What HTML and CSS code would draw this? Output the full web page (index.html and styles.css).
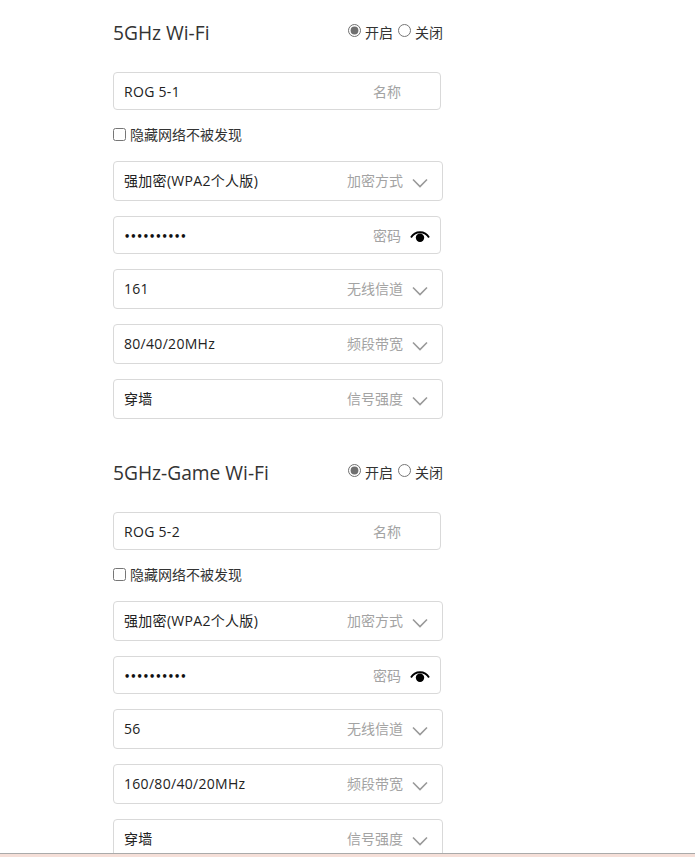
FILE: index.html
```html
<!DOCTYPE html>
<html lang="zh">
<head>
<meta charset="utf-8">
<title>Wi-Fi</title>
<link rel="stylesheet" href="styles.css">
</head>
<body>
<main class="page">
  <section class="band">
    <header class="band-head">
      <h2 class="band-title">5GHz Wi-Fi</h2>
      <div class="switch">
        <label class="switch-opt"><input type="radio" name="a" checked>开启</label>
        <label class="switch-opt"><input type="radio" name="a">关闭</label>
      </div>
    </header>
    <div class="field field-text"><span class="value">ROG 5-1</span><span class="hint">名称</span></div>
    <label class="hide-row"><input type="checkbox">隐藏网络不被发现</label>
    <div class="field field-select first-select"><span class="value">强加密(WPA2个人版)</span><span class="hint">加密方式</span><svg class="chev" viewBox="0 0 16 10"><path d="M1 1.5 8 8.5 15 1.5"/></svg></div>
    <div class="field field-pass"><span class="value dots">••••••••••</span><span class="hint">密码</span><svg class="eye" viewBox="0 0 20 14"><path class="eye-lid" d="M1 7.5C5 .5 15 .5 19 7.5"/><circle cx="10" cy="7.8" r="4.2"/></svg></div>
    <div class="field field-select"><span class="value">161</span><span class="hint">无线信道</span><svg class="chev" viewBox="0 0 16 10"><path d="M1 1.5 8 8.5 15 1.5"/></svg></div>
    <div class="field field-select"><span class="value">80/40/20MHz</span><span class="hint">频段带宽</span><svg class="chev" viewBox="0 0 16 10"><path d="M1 1.5 8 8.5 15 1.5"/></svg></div>
    <div class="field field-select"><span class="value">穿墙</span><span class="hint">信号强度</span><svg class="chev" viewBox="0 0 16 10"><path d="M1 1.5 8 8.5 15 1.5"/></svg></div>
  </section>
  <section class="band">
    <header class="band-head">
      <h2 class="band-title">5GHz-Game Wi-Fi</h2>
      <div class="switch">
        <label class="switch-opt"><input type="radio" name="b" checked>开启</label>
        <label class="switch-opt"><input type="radio" name="b">关闭</label>
      </div>
    </header>
    <div class="field field-text"><span class="value">ROG 5-2</span><span class="hint">名称</span></div>
    <label class="hide-row"><input type="checkbox">隐藏网络不被发现</label>
    <div class="field field-select first-select"><span class="value">强加密(WPA2个人版)</span><span class="hint">加密方式</span><svg class="chev" viewBox="0 0 16 10"><path d="M1 1.5 8 8.5 15 1.5"/></svg></div>
    <div class="field field-pass"><span class="value dots">••••••••••</span><span class="hint">密码</span><svg class="eye" viewBox="0 0 20 14"><path class="eye-lid" d="M1 7.5C5 .5 15 .5 19 7.5"/><circle cx="10" cy="7.8" r="4.2"/></svg></div>
    <div class="field field-select"><span class="value">56</span><span class="hint">无线信道</span><svg class="chev" viewBox="0 0 16 10"><path d="M1 1.5 8 8.5 15 1.5"/></svg></div>
    <div class="field field-select"><span class="value">160/80/40/20MHz</span><span class="hint">频段带宽</span><svg class="chev" viewBox="0 0 16 10"><path d="M1 1.5 8 8.5 15 1.5"/></svg></div>
    <div class="field field-select"><span class="value">穿墙</span><span class="hint">信号强度</span><svg class="chev" viewBox="0 0 16 10"><path d="M1 1.5 8 8.5 15 1.5"/></svg></div>
  </section>
</main>
<div class="bottom-bar"></div>
</body>
</html>
```
FILE: styles.css
```css
html, body {
  margin: 0;
  height: 857px;
  overflow: hidden;
  background: #fff;
}
body {
  font-family: "Open Sans", "Noto Sans CJK SC", sans-serif;
  font-size: 14px;
  color: #222;
}
.page {
  display: flex;
  flex-direction: column;
  gap: 40px;
  padding: 19px 0 0 113px;
  width: 330px;
}
.band {
  display: flex;
  flex-direction: column;
  align-items: flex-start;
}
.band-head {
  display: flex;
  justify-content: space-between;
  align-items: flex-start;
  width: 330px;
  height: 53px;
}
.band-title {
  margin: 0;
  font-size: 19.2px;
  line-height: 28px;
  font-weight: 400;
  color: #333;
}
.switch {
  display: flex;
  gap: 5px;
  font-size: 14px;
  line-height: 18px;
  margin-top: 5px;
  color: #333;
}
.switch-opt {
  display: flex;
  align-items: center;
  gap: 4px;
}
.switch-opt input {
  margin: 0 0 5px;
  width: 13px;
  height: 13px;
  accent-color: #6f6f6f;
}
.field {
  box-sizing: border-box;
  display: flex;
  align-items: center;
  width: 330px;
  border: 1px solid #d9d9d9;
  border-radius: 4px;
  padding: 0 10px;
  background: #fff;
}
.field-text, .field-pass {
  width: 328px;
  height: 38px;
}
.field-select {
  height: 40px;
  margin-top: 15px;
  padding-bottom: 2px;
}
.first-select { margin-top: 0; }
.field-pass { margin-top: 15px; }
.value {
  flex: 1;
  font-size: 14px;
  letter-spacing: 0.3px;
  color: #222;
}
.dots {
  font-family: "DejaVu Sans", sans-serif;
  font-size: 9.8px;
  font-weight: 700;
  letter-spacing: 0;
  padding-top: 2px;
  color: #111;
}
.hint {
  font-size: 14px;
  color: #a3a3a3;
}
.field-text .hint { margin-right: 29px; }
.chev {
  width: 16px;
  height: 10px;
  margin-left: 9px;
  margin-right: 4px;
  margin-top: 6px;
  fill: none;
  stroke: #999;
  stroke-width: 1.6;
}
.eye {
  width: 20px;
  height: 14px;
  margin-left: 9px;
  margin-top: 3px;
  flex: none;
}
.eye-lid {
  fill: none;
  stroke: #000;
  stroke-width: 1.8;
}
.hide-row {
  display: flex;
  align-items: center;
  gap: 4px;
  box-sizing: border-box;
  height: 51px;
  padding-bottom: 4px;
  font-size: 14px;
  color: #333;
}
.hide-row input {
  margin: 2px 0 0;
  width: 13px;
  height: 13px;
}
.bottom-bar {
  position: fixed;
  left: 0;
  right: 0;
  bottom: 0;
  height: 3px;
  background: #f5dfd8;
  border-top: 1px solid #aaa;
}
```
